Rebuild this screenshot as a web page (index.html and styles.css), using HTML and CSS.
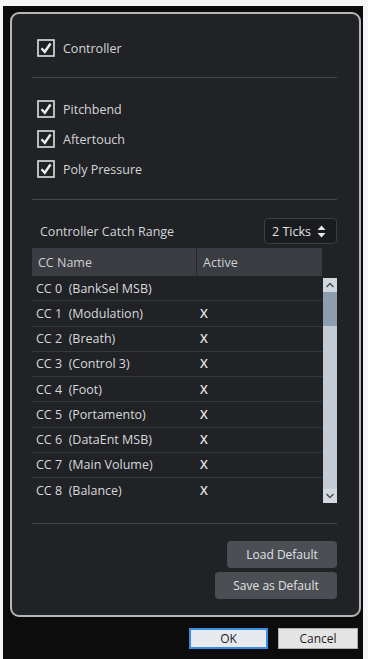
FILE: index.html
```html
<!DOCTYPE html>
<html>
<head>
<meta charset="utf-8">
<link rel="stylesheet" href="styles.css">
</head>
<body>
<div class="frame">
  <div class="panel">
    <div class="check-row">
      <span class="cb"><svg viewBox="0 0 18 18" width="18" height="18"><rect x="1" y="1" width="16" height="16" fill="none" stroke="#d4d5d7" stroke-width="1.7"/><path d="M4.5 9.2 L7.8 12.8 L13.5 4.5" fill="none" stroke="#eceded" stroke-width="2.4"/></svg></span>
      <span class="label">Controller</span>
    </div>
    <div class="sep sep1"></div>
    <div class="check-group">
      <div class="check-row">
        <span class="cb"><svg viewBox="0 0 18 18" width="18" height="18"><rect x="1" y="1" width="16" height="16" fill="none" stroke="#d4d5d7" stroke-width="1.7"/><path d="M4.5 9.2 L7.8 12.8 L13.5 4.5" fill="none" stroke="#eceded" stroke-width="2.4"/></svg></span>
        <span class="label">Pitchbend</span>
      </div>
      <div class="check-row">
        <span class="cb"><svg viewBox="0 0 18 18" width="18" height="18"><rect x="1" y="1" width="16" height="16" fill="none" stroke="#d4d5d7" stroke-width="1.7"/><path d="M4.5 9.2 L7.8 12.8 L13.5 4.5" fill="none" stroke="#eceded" stroke-width="2.4"/></svg></span>
        <span class="label">Aftertouch</span>
      </div>
      <div class="check-row">
        <span class="cb"><svg viewBox="0 0 18 18" width="18" height="18"><rect x="1" y="1" width="16" height="16" fill="none" stroke="#d4d5d7" stroke-width="1.7"/><path d="M4.5 9.2 L7.8 12.8 L13.5 4.5" fill="none" stroke="#eceded" stroke-width="2.4"/></svg></span>
        <span class="label">Poly Pressure</span>
      </div>
    </div>
    <div class="sep sep2"></div>
    <div class="range-row">
      <span class="label range-label">Controller Catch Range</span>
      <span class="spinner">2 Ticks <svg width="9" height="13" viewBox="0 0 9 13"><path d="M4.5 0.5 L8.5 5 L0.5 5 Z M0.5 8 L8.5 8 L4.5 12.5 Z" fill="#e6e7e8"/></svg></span>
    </div>
    <div class="table-wrap">
      <div class="table">
        <div class="thead">
          <div class="th th-name">CC Name</div>
          <div class="th th-active">Active</div>
        </div>
        <div class="tr"><span class="td-name">CC 0&nbsp; (BankSel MSB)</span><span class="td-active"></span></div>
        <div class="tr"><span class="td-name">CC 1&nbsp; (Modulation)</span><span class="td-active">X</span></div>
        <div class="tr"><span class="td-name">CC 2&nbsp; (Breath)</span><span class="td-active">X</span></div>
        <div class="tr"><span class="td-name">CC 3&nbsp; (Control 3)</span><span class="td-active">X</span></div>
        <div class="tr"><span class="td-name">CC 4&nbsp; (Foot)</span><span class="td-active">X</span></div>
        <div class="tr"><span class="td-name">CC 5&nbsp; (Portamento)</span><span class="td-active">X</span></div>
        <div class="tr"><span class="td-name">CC 6&nbsp; (DataEnt MSB)</span><span class="td-active">X</span></div>
        <div class="tr"><span class="td-name">CC 7&nbsp; (Main Volume)</span><span class="td-active">X</span></div>
        <div class="tr last"><span class="td-name">CC 8&nbsp; (Balance)</span><span class="td-active">X</span></div>
      </div>
      <div class="scrollbar">
        <div class="sb-btn"><svg width="10" height="6" viewBox="0 0 10 6"><path d="M1.5 5 L5 1.5 L8.5 5" fill="none" stroke="#4a525c" stroke-width="1.5"/></svg></div>
        <div class="sb-thumb"></div>
        <div class="sb-track"></div>
        <div class="sb-btn"><svg width="10" height="6" viewBox="0 0 10 6"><path d="M1.5 1 L5 4.5 L8.5 1" fill="none" stroke="#4a525c" stroke-width="1.5"/></svg></div>
      </div>
    </div>
    <div class="sep sep3"></div>
    <div class="actions">
      <button class="btn load">Load Default</button>
      <button class="btn save">Save as Default</button>
    </div>
  </div>
  <div class="footer">
    <button class="dlg ok">OK</button>
    <button class="dlg cancel">Cancel</button>
  </div>
</div>
</body>
</html>
```
FILE: styles.css
```css
* { box-sizing: border-box; }
html, body { margin: 0; padding: 0; background: #f6f6f6; }
body {
  font-family: "Open Sans", "Noto Sans", sans-serif;
  font-size: 12.5px;
  color: #d4d5d7;
}
.frame {
  margin: 6px 5px 0 3px;
  height: 653px;
  background: #0c0c0d;
  padding: 6px 2px 0 7px;
}
.panel {
  width: 351px;
  height: 605px;
  border: 2px solid #b4b6b8;
  border-radius: 9px;
  background: #202226;
  padding: 19px 22px 0 20px;
}
.check-row {
  display: flex;
  align-items: center;
  height: 30px;
  padding-left: 5px;
}
.cb { display: flex; width: 18px; height: 18px; margin-right: 8px; }
.label { color: #d4d5d7; }
.sep { height: 1px; background: #43464b; }
.sep1 { margin-top: 14px; margin-bottom: 16px; }
.sep2 { margin-top: 15px; margin-bottom: 18px; }
.range-row {
  display: flex;
  align-items: center;
  justify-content: space-between;
  height: 26px;
}
.range-label { padding-left: 8px; }
.spinner {
  display: flex;
  align-items: center;
  gap: 6px;
  width: 73px;
  height: 26px;
  padding-left: 7px;
  border: 1px solid #3b3e43;
  border-radius: 4px;
  background: #1a1b1e;
  color: #e2e3e5;
  font-size: 12.5px;
}
.table-wrap {
  margin-top: 4px;
  height: 257px;
  display: flex;
}
.table { width: 290px; }
.thead {
  display: flex;
  height: 28px;
  background: #3a3c41;
}
.th {
  display: flex;
  align-items: center;
  color: #cfd0d3;
}
.th-name { width: 165px; padding-left: 6px; border-right: 1px solid #26282c; }
.th-active { flex: 1; padding-left: 6px; }
.tr {
  display: flex;
  align-items: center;
  height: 25.25px;
  border-bottom: 1px solid #35383c;
}
.tr.last { border-bottom: none; }
.td-name { width: 166px; padding-left: 4px; color: #d8d9db; }
.td-active { color: #e2e3e5; font-weight: 600; padding-left: 2px; }
.scrollbar {
  margin-top: 30px;
  width: 14px;
  height: 225px;
  margin-left: 1px;
  display: flex;
  flex-direction: column;
  background: #c3ccd4;
}
.sb-btn {
  height: 14px;
  display: flex;
  align-items: center;
  justify-content: center;
  background: #d2d8de;
}
.sb-thumb { height: 34px; background: #8d9db0; }
.sb-track { flex: 1; background: #c3ccd4; }
.sep3 { margin-top: 18px; }
.actions {
  display: flex;
  flex-direction: column;
  align-items: flex-end;
  gap: 4px;
  margin-top: 17px;
}
.btn {
  font-family: "Open Sans", "Noto Sans", sans-serif;
  font-size: 12px;
  color: #e0e1e3;
  background: #4b4e53;
  border: none;
  border-radius: 4px;
  height: 27px;
  padding: 0;
}
.load { width: 110px; }
.save { width: 122px; }
.footer {
  display: flex;
  justify-content: flex-end;
  gap: 10px;
  padding: 11px 3px 0 0;
}
.dlg {
  font-family: "Open Sans", "Noto Sans", sans-serif;
  font-size: 12px;
  width: 80px;
  height: 21px;
  padding: 0;
  color: #1e1e1e;
  background: #e4e4e4;
  border: 1px solid #adadad;
}
.ok { border: 2px solid #3c8ede; background: #e6eaee; width: 79px; }
```
